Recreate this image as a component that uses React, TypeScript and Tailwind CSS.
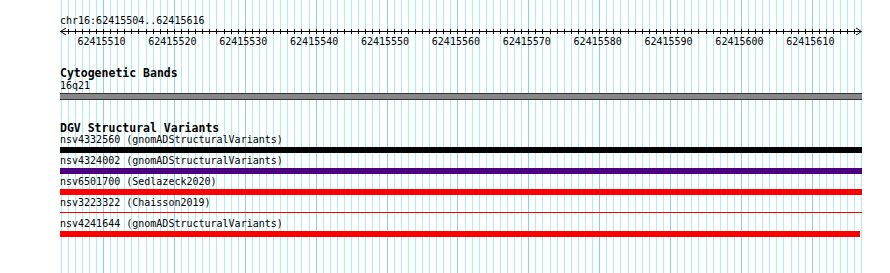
import React from "react";

const START = 62415504;
const END = 62415616;
const PX = 7.088;
const OFFSET = 0.5;

const bases = Array.from({ length: END - START + 2 }, (_, k) => k);

const mono = "font-['DejaVu_Sans_Mono','Liberation_Mono',monospace]";

function GridLines() {
  return (
    <svg className="absolute left-[60px] top-0" width={803} height={273}>
      {bases.map((k) => {
        const x = Math.round(OFFSET + k * PX) + 0.5;
        const major = (START + k) % 10 === 0;
        return (
          <line
            key={k}
            x1={x}
            x2={x}
            y1={0}
            y2={273}
            stroke={major ? "#87cefa" : "#afeeee"}
            strokeWidth={1}
          />
        );
      })}
    </svg>
  );
}

function Ruler() {
  const ticks = bases.slice(1, -1);
  const labels = bases.filter((k) => (START + k) % 10 === 0);
  return (
    <svg width={803} height={20} className="block">
      <line x1={0} x2={801} y1={4.5} y2={4.5} stroke="#000" strokeWidth={1} />
      {ticks.map((k) => {
        const x = Math.round(OFFSET + k * PX) + 0.5;
        return <line key={k} x1={x} x2={x} y1={2} y2={7} stroke="#000" strokeWidth={1} />;
      })}
      <polyline points="6,1 0.5,4.5 6,8" fill="none" stroke="#000" strokeWidth={1} />
      <polyline points="796,1 801.5,4.5 796,8" fill="none" stroke="#000" strokeWidth={1} />
      {labels.map((k) => (
        <text
          key={k}
          x={OFFSET + k * PX - 1.5}
          y={17.5}
          textAnchor="middle"
          fontSize={10}
          fontFamily="'DejaVu Sans Mono', 'Liberation Mono', monospace"
          fill="#000"
        >
          {START + k}
        </text>
      ))}
    </svg>
  );
}

type Variant = { id: string; source: string; kind: "bar" | "line"; color: string; short?: boolean };

const variants: Variant[] = [
  { id: "nsv4332560", source: "gnomADStructuralVariants", kind: "bar", color: "bg-black" },
  { id: "nsv4324002", source: "gnomADStructuralVariants", kind: "bar", color: "bg-[#4b0082]" },
  { id: "nsv6501700", source: "Sedlazeck2020", kind: "bar", color: "bg-[#ff0000]" },
  { id: "nsv3223322", source: "Chaisson2019", kind: "line", color: "bg-[#ff0000]" },
  { id: "nsv4241644", source: "gnomADStructuralVariants", kind: "bar", color: "bg-[#ff0000]", short: true },
];

export default function App() {
  return (
    <div className={`relative w-[890px] h-[273px] overflow-hidden bg-white text-black ${mono}`}>
      <GridLines />
      <div className="relative pl-[60px] w-[863px]">
        <div className="pt-[15px] h-[27px] text-[10px] leading-[12px]">chr16:62415504..62415616</div>
        <Ruler />

        {/* Cytogenetic bands */}
        <div className="mt-[20px] h-[13px] text-[11.5px] leading-[13px] font-bold">Cytogenetic Bands</div>
        <div className="h-[12px] text-[10px] leading-[12px]">16q21</div>
        <div className="mt-[1px] h-[7px] w-[802px] border-y border-[#333] bg-[#888]" />

        {/* DGV */}
        <div className="mt-[22px] h-[12px] text-[11.5px] leading-[12px] font-bold">DGV Structural Variants</div>
        <div className="flex flex-col">
          {variants.map((v) => (
            <div key={v.id} className="h-[21px]">
              <div className="h-[12px] text-[10px] leading-[12px] whitespace-pre">
                {v.id} ({v.source})
              </div>
              <div className="mt-[1px] h-[6px] flex items-start">
                <div
                  className={`${v.color} ${v.kind === "bar" ? "h-[6px]" : "mt-[2px] h-[1px]"} ${
                    v.short ? "w-[800px]" : "w-[802px]"
                  }`}
                />
              </div>
            </div>
          ))}
        </div>
      </div>
    </div>
  );
}
